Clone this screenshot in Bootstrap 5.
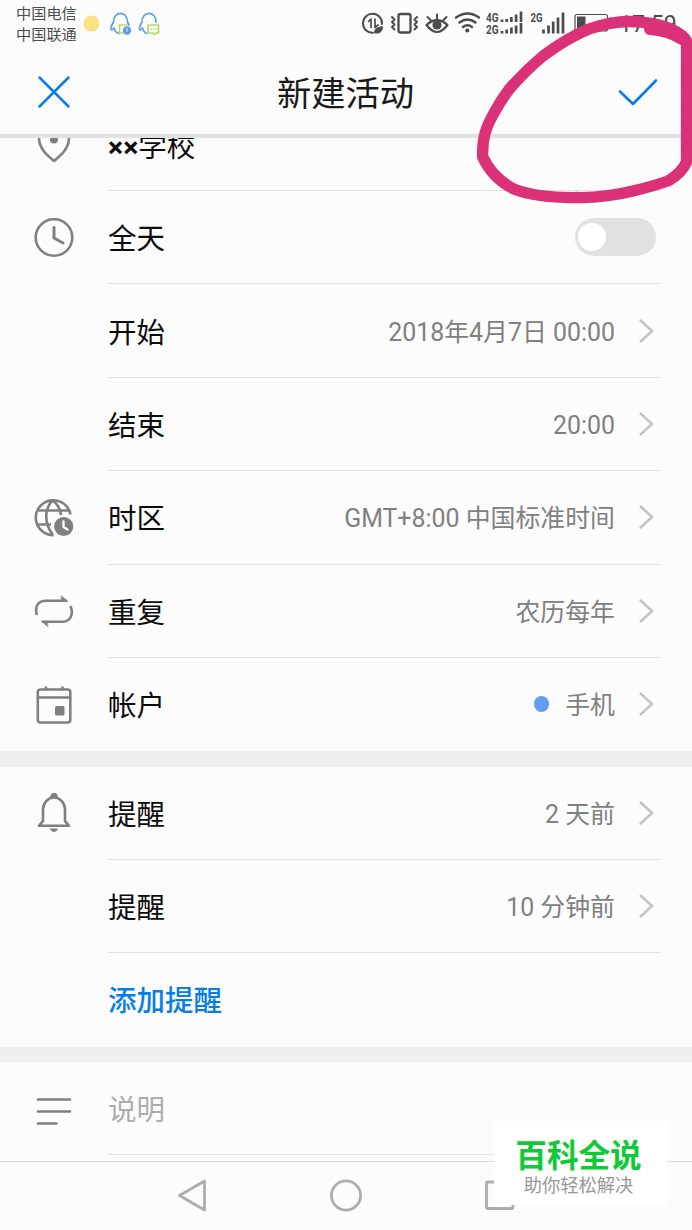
<!DOCTYPE html>
<html lang="zh-CN">
<head>
<meta charset="utf-8">
<meta name="viewport" content="width=device-width, initial-scale=1">
<title>新建活动</title>
<link href="https://cdn.jsdelivr.net/npm/bootstrap@5.3.0/dist/css/bootstrap.min.css" rel="stylesheet">
<style>
  body { font-family: Roboto, "Noto Sans CJK SC", sans-serif; background: #fcfcfc; color: #0c0c0c; }
  svg { display: block; flex: none; }
  .phone { width: 692px; height: 1230px; background: #fcfcfc; }
  .status { height: 48px; padding-left: 16px; color: #4c4c4c; }
  .carriers { font-size: 15.2px; line-height: 21px; padding-top: 4px; width: 67px; }
  .clock { font-size: 23.2px; line-height: 28px; margin-top: 10px; width: 73px; }
  .titlebar { height: 90.4px; padding: 0 34px; border-bottom: 4px solid #e1e1e1; }
  .titlebar h1 { font-size: 34.3px; line-height: 48px; color: #1a1a1a; padding-top: 6px; padding-right: 1px; }
  .line-ico { fill: none; stroke: #808080; stroke-width: 2.6; stroke-linecap: round; stroke-linejoin: round; }
  .clip-row { height: 52.6px; }
  .entry { height: 93.4px; }
  .clip-row, .entry { padding-left: 34px; }
  .ico { width: 74px; }
  .ico svg { margin-left: -.5px; }
  .entry-body { margin-right: 31px; border-bottom: 1.5px solid #e1e1e1; font-size: 28.5px; line-height: 40px; padding-right: 7px; }
  .entry-body > span:first-child { padding-top: 6px; }
  .clip-row .entry-body { padding-bottom: 38px; }
  .bare { border-bottom-color: transparent; }
  .val { font-size: 24.9px; color: #808080; padding-top: 4px; }
  .chev { margin-left: 23px; fill: none; stroke: #c4c4c4; stroke-width: 2.6; }
  .band { height: 15.2px; background: #efefef; }
  .toggle { width: 81px; height: 38px; background: #e1e1e1; margin-right: -1.5px; padding-left: 3.5px; }
  .knob { width: 28px; height: 28px; background: #fff; }
  .account-dot { width: 15.5px; height: 15.5px; background: #629cf5; margin: 0 16px 0 0; }
  .add-link { color: #087ce8; }
  .hint { color: #adadad; }
  .keys { height: 69px; border-top: 1.5px solid #dedede; padding-left: 176px; }
  .keys svg { fill: none; stroke: #adadad; stroke-width: 2.8; stroke-linejoin: round; }
  .brand { left: 494px; top: 1121px; width: 173px; height: 84px; background: #fff; padding: 18px 4px 0 0; }
  .brand-name { font-size: 31.6px; line-height: 36px; font-weight: 700; color: #0dca35; }
  .brand-sub { font-size: 18.3px; line-height: 22px; color: #979797; }
  .tag { font: 700 12.5px/1 Roboto, sans-serif; }
</style>
</head>
<body>
<div class="phone position-relative overflow-hidden d-flex flex-column">

  <div class="status d-flex">
    <div class="carriers text-nowrap">中国电信<br>中国联通</div>
    <svg width="80" height="48" viewBox="83 0 80 48" fill="none" stroke-width="1.7" stroke-linecap="round" stroke-linejoin="round">
      <circle cx="91.500" cy="23.500" r="8" fill="#fbe183"/>
      <path d="M113.500 22C113.500 10.500 127.500 10.500 127.500 22M113.500 22C111 26 110 30 112 30L114 28C115 31 116 33 119 33.500M127.500 22L129 25" stroke="#5b9fe8"/>
      <path d="M127 25H119.500V33H123" stroke="#b4dc5b"/>
      <circle cx="127" cy="30.500" r="4.200" fill="#5b9fe8"/><path d="M127 28.500v2.500" stroke="#d9ecff" stroke-width="1.200"/>
      <path d="M142 22C142 10.500 156 10.500 156 22M142 22C139.500 26 138.500 30 140.500 30L142.500 28C143.500 31 144.500 33 147 33.500" stroke="#5b9fe8"/>
      <path d="M148 25H158.500V33H156L154.500 34.500L153 33H148Z" stroke="#b4dc5b"/><path d="M151 29h.1M153.500 29h.1M156 29h.1" stroke="#b4dc5b"/>
    </svg>
    <svg class="ms-auto" width="260" height="48" viewBox="359 0 260 48" fill="none" stroke="#4c4c4c" stroke-width="2" stroke-linecap="round" stroke-linejoin="round">
      <path d="M382 24A9.500 9.500 0 1 0 373 32.800"/><path d="M368.500 21.500L371 19V27.500M375 19V27.500L378 25" stroke-width="1.700"/>
      <path d="M374 33C374 28 378 27 383 26C383 32 379 35 374 33Z" fill="#4c4c4c" stroke="none"/>
      <rect x="398.500" y="14" width="12" height="18.500" rx="2" stroke-width="2.300"/>
      <path d="M392 17l2.500 2.500-2.500 2.500 2.500 2.500-2.500 2.500 2.500 2.500M417 17l-2.500 2.500 2.500 2.500-2.500 2.500 2.500 2.500-2.500 2.500" stroke-width="2"/>
      <path d="M426.500 25Q437 15.500 447.500 25Q437 39 426.500 25Z" stroke-width="2.200"/><circle cx="437" cy="25" r="4.600" fill="#4c4c4c" stroke="none"/>
      <path d="M437 19.500V14.500M431 20.500L427.500 17M443 20.500L446.500 17"/>
      <path d="M456 17.500Q467.500 9.500 479 17.500M459.500 22.500Q467.500 16.500 475.500 22.500M463 27Q467.500 23.500 472 27" stroke-width="2.400"/><circle cx="467.300" cy="30.500" r="2" fill="#4c4c4c" stroke="none"/>
      <g fill="#4c4c4c" stroke="none">
        <text class="tag" x="486" y="21.500" textLength="12.500" lengthAdjust="spacingAndGlyphs">4G</text>
        <text class="tag" x="486" y="33.500" textLength="12.500" lengthAdjust="spacingAndGlyphs">2G</text>
        <text class="tag" x="530.500" y="21.500" textLength="12" lengthAdjust="spacingAndGlyphs">2G</text>
      </g>
      <g stroke-linecap="butt" stroke-width="2.700">
        <path d="M502 22v-2.500M506.700 22v-3M511.400 22v-5M516.100 22v-7.500M521 22v-10.500M502 33.500v-2.500M506.700 33.500v-4M511.400 33.500v-6M516.100 33.500v-8M521 33.500v-10.500"/>
        <path d="M543.500 33.500v-4M548.500 33.500v-8M553.200 33.500v-12M558 33.500v-16M563 33.500v-21"/>
      </g>
      <rect x="575" y="14.500" width="32.500" height="16.500" rx="2" stroke-width="1.200"/><rect x="577" y="16.500" width="8.500" height="12.500" fill="#4c4c4c" stroke="none"/><path d="M610.500 18v6" stroke-width="1.500"/>
    </svg>
    <div class="clock text-nowrap">17:59</div>
  </div>

  <header class="titlebar d-flex align-items-center justify-content-between">
    <svg width="40" height="40" viewBox="0 0 40 40" fill="none" stroke="#087ce8" stroke-width="2.500" stroke-linecap="round"><path d="M5.500 6.500L34.500 35.500M34.500 6.500L5.500 35.500"/></svg>
    <h1 class="m-0 fw-normal">新建活动</h1>
    <svg width="40" height="40" viewBox="0 0 40 40" fill="none" stroke="#087ce8" stroke-width="2.600" stroke-linecap="round" stroke-linejoin="round"><path d="M2 20.500L15 33L38 9.500"/></svg>
  </header>

  <main>
    <div class="clip-row d-flex overflow-hidden">
      <div class="ico"><svg width="40" height="40" viewBox="0 0 40 40"><path class="line-ico" d="M5 0C5 11 14 18 20 23C26 18 35 11 35 0"/><circle cx="20" cy="1.500" r="4" fill="#808080"/></svg></div>
      <div class="entry-body flex-grow-1 d-flex align-items-center text-nowrap"><span><span class="fw-bold">××</span>学校</span></div>
    </div>
    <div class="entry d-flex">
      <div class="ico align-self-center"><svg width="40" height="40" viewBox="0 0 40 40" class="line-ico"><circle cx="20" cy="19.500" r="18.300"/><path d="M20 9.500V20L29 25" stroke-width="3"/></svg></div>
      <div class="entry-body flex-grow-1 d-flex align-items-center justify-content-between"><span>全天</span><div class="toggle rounded-pill d-flex align-items-center"><div class="knob rounded-circle"></div></div></div>
    </div>
    <div class="entry d-flex">
      <div class="ico"></div>
      <div class="entry-body flex-grow-1 d-flex align-items-center"><span>开始</span><span class="val ms-auto">2018年4月7日 00:00</span><svg class="chev" width="16" height="26" viewBox="0 0 16 26"><path d="M2 2L14 13L2 24"/></svg></div>
    </div>
    <div class="entry d-flex">
      <div class="ico"></div>
      <div class="entry-body flex-grow-1 d-flex align-items-center"><span>结束</span><span class="val ms-auto">20:00</span><svg class="chev" width="16" height="26" viewBox="0 0 16 26"><path d="M2 2L14 13L2 24"/></svg></div>
    </div>
    <div class="entry d-flex">
      <div class="ico align-self-center"><svg width="40" height="40" viewBox="0 0 40 40" class="line-ico"><path stroke-linecap="butt" d="M36.500 16.500A17.500 17.500 0 1 0 19.500 37.200M19 37Q11 27 12.500 15Q14 6 19 2.500Q26 8 27 17M4 12.500H35M3 26.500H17"/><circle cx="29.700" cy="28.500" r="9.600" fill="#808080" stroke="none"/><path d="M29.500 23.500V29L33.500 31.500" stroke="#fcfcfc" stroke-width="2.400"/></svg></div>
      <div class="entry-body flex-grow-1 d-flex align-items-center"><span>时区</span><span class="val ms-auto">GMT+8:00 中国标准时间</span><svg class="chev" width="16" height="26" viewBox="0 0 16 26"><path d="M2 2L14 13L2 24"/></svg></div>
    </div>
    <div class="entry d-flex">
      <div class="ico align-self-center"><svg width="40" height="40" viewBox="0 0 40 40" class="line-ico"><path d="M2.600 23C.5 14 5 9.700 12 9.700H32M36.800 16C40 24.500 35.500 30.800 28 30.800H9"/><path d="M27.500 5L34 10.500H27.500ZM13.500 35.500L7.500 30H13.500Z" fill="#808080" stroke-width=".6"/></svg></div>
      <div class="entry-body flex-grow-1 d-flex align-items-center"><span>重复</span><span class="val ms-auto">农历每年</span><svg class="chev" width="16" height="26" viewBox="0 0 16 26"><path d="M2 2L14 13L2 24"/></svg></div>
    </div>
    <div class="entry d-flex">
      <div class="ico align-self-center"><svg width="40" height="40" viewBox="0 0 40 40" class="line-ico"><rect x="3.800" y="4.500" width="32.500" height="33" rx="2.500"/><path d="M4 12.500H36M12 2.500V4M28.500 2.500V4"/><rect x="21" y="21" width="9.500" height="9.500" rx="1.500" fill="#808080" stroke="none"/></svg></div>
      <div class="entry-body bare flex-grow-1 d-flex align-items-center"><span>帐户</span><span class="account-dot rounded-circle ms-auto"></span><span class="val">手机</span><svg class="chev" width="16" height="26" viewBox="0 0 16 26"><path d="M2 2L14 13L2 24"/></svg></div>
    </div>

    <div class="band"></div>

    <div class="entry d-flex">
      <div class="ico align-self-center"><svg width="40" height="40" viewBox="0 0 40 40" class="line-ico"><path d="M5 32.800H35L31 28V16.500A11 12 0 0 0 9 16.500V28L5 32.800Z"/><path d="M17.500 3.700A2.500 2.500 0 0 1 22.500 3.700Z" fill="#808080"/><path d="M16.500 36H23.500Q20 41.500 16.500 36Z" fill="#808080" stroke-width="1"/></svg></div>
      <div class="entry-body flex-grow-1 d-flex align-items-center"><span>提醒</span><span class="val ms-auto">2 天前</span><svg class="chev" width="16" height="26" viewBox="0 0 16 26"><path d="M2 2L14 13L2 24"/></svg></div>
    </div>
    <div class="entry d-flex">
      <div class="ico"></div>
      <div class="entry-body flex-grow-1 d-flex align-items-center"><span>提醒</span><span class="val ms-auto">10 分钟前</span><svg class="chev" width="16" height="26" viewBox="0 0 16 26"><path d="M2 2L14 13L2 24"/></svg></div>
    </div>
    <div class="entry d-flex">
      <div class="ico"></div>
      <div class="entry-body bare flex-grow-1 d-flex align-items-center add-link"><span class="fw-medium">添加提醒</span></div>
    </div>

    <div class="band"></div>

    <div class="entry d-flex">
      <div class="ico align-self-center"><svg width="40" height="40" viewBox="0 0 40 40" class="line-ico"><path d="M4 10.500H36M4 22.500H36M4 34.500H22.500"/></svg></div>
      <div class="entry-body flex-grow-1 d-flex align-items-center hint"><span>说明</span></div>
    </div>
  </main>

  <nav class="keys mt-auto d-flex align-items-center">
    <svg width="340" height="36" viewBox="176 1178 340 36"><path d="M179.500 1195.500L204.500 1181V1210Z"/><circle cx="346" cy="1195.500" r="14.600"/><rect x="486.500" y="1182" width="26.500" height="26.500" rx="1"/></svg>
  </nav>

  <div class="brand position-absolute text-center text-nowrap">
    <div class="brand-name">百科全说</div>
    <div class="brand-sub">助你轻松解决</div>
  </div>

  <svg class="position-absolute top-0 start-0" width="692" height="215" viewBox="0 0 692 215" fill="none" stroke="#db3277" stroke-width="11.300" stroke-linecap="round" stroke-linejoin="round">
    <path d="M482.700 157C482 138 486 127 494 113Q501 100 509 89.500Q525 71 543 56Q567 38 589 29Q611 21.500 629 21.500Q655 22 671 29Q684 35 686.500 41V162Q682 173 668 181Q650 187 635 190.500Q605 198 577 197.500Q538 198 515 189.500Q493 179 482.700 157Z"/>
    <path d="M650 29Q668 30 682 39" stroke-width="12"/>
  </svg>
</div>
<script src="https://cdn.jsdelivr.net/npm/bootstrap@5.3.0/dist/js/bootstrap.bundle.min.js"></script>
</body>
</html>
